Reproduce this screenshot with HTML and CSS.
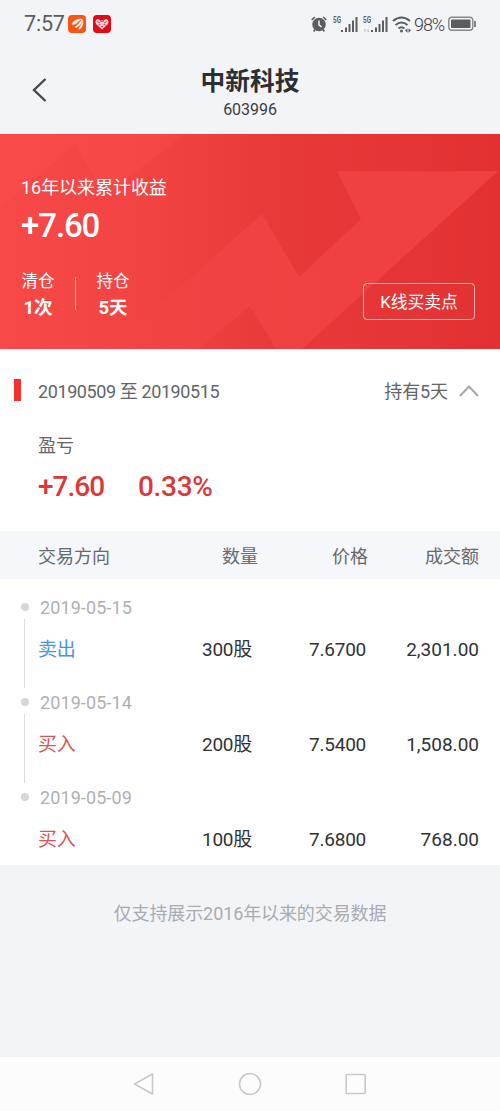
FILE: index.html
```html
<!DOCTYPE html>
<html lang="zh-CN">
<head>
<meta charset="utf-8">
<meta name="viewport" content="width=device-width">
<title>中新科技</title>
<link rel="stylesheet" href="styles.css">
</head>
<body>
<div class="app">
  <div class="status">
    <span class="clock">7:57</span>
    <svg class="badge-orange" width="18" height="18" viewBox="0 0 18 18"><rect width="18" height="18" rx="4" fill="#f95615"/><path d="M4 9C5.500 5.500 9.500 4 14 4C11 5 9.500 8 5.500 9.600ZM7 11.800C10 10 12 7.500 14.300 4.300C13.500 8.500 11.500 11 8 12.700ZM10.800 13.500C13 11 14.200 8 14.600 5C15.300 8.500 14.500 12 11.800 14.300Z" fill="#fff" stroke="#fff" stroke-width=".5"/></svg>
    <svg class="badge-red" width="18" height="18" viewBox="0 0 18 18"><rect width="18" height="18" rx="4" fill="#e30919"/><path d="M9 14.500L3.500 9.500C1.500 6.500 3 4 5.500 4L7 5.500H11L12.500 4C15 4 16.500 6.500 14.500 9.500Z" fill="#fff" opacity=".85"/><path d="M4 6.500L7 8M14 6.500L11 8M5.500 10L7.500 9.500M12.500 10L10.500 9.500M8 12L9 11L10 12M7 5.500L9 7L11 5.500" stroke="#e30919" stroke-width=".8" fill="none"/></svg>
    <svg class="indicators" width="104" height="20" viewBox="0 0 104 20">
      <g fill="none" stroke="#5b5d61">
        <circle cx="8" cy="10.500" r="6" fill="#5b5d61" stroke-width="1.500"/>
        <path d="M.7 6L3.800 3M15.300 6L12.200 3M4 15.500L2.700 17.500M12 15.500L13.300 17.500" stroke-width="1.700"/>
        <path d="M8 6.500V10.800L10.500 13" stroke="#f3f4f8" stroke-width="1.500"/>
        <path d="M31 18V16M35 18V13.500M38.500 18V10M42 18V6.500M45.500 18V3M61 18V16M65 18V13.500M68.500 18V10M72 18V6.500M75.500 18V3" stroke-width="2"/>
        <path d="M82 7Q90.500 0 99 7M84.500 11Q90.500 6 96.500 11M87.500 14.500Q90.500 12 93.500 14.500" stroke-width="1.900"/>
      </g>
      <circle cx="90.500" cy="17" r="1.500" fill="#5b5d61"/>
      <path d="M94 16.500L96.500 14.200V18.800ZM100 16.500L97.500 14.200V18.800Z" fill="#5b5d61"/>
      <path d="M54 15V18M53 16L54 15M57 15V18M58 17L57 18" stroke="#bbbdc1" fill="none"/>
      <text class="net" x="22" y="9" textLength="8" lengthAdjust="spacingAndGlyphs">5G</text><text class="net" x="52" y="9" textLength="8" lengthAdjust="spacingAndGlyphs">5G</text>
    </svg>
    <span class="percent">98%</span>
    <svg class="battery" width="30" height="16" viewBox="0 0 30 16"><rect x=".8" y="1.300" width="24" height="13" rx="3" fill="none" stroke="#85878b" stroke-width="1.400"/><rect x="3" y="3.500" width="19.500" height="8.600" rx="1" fill="#5b5d61"/><path d="M27 5V11" stroke="#66686c" stroke-width="1.600"/></svg>
  </div>
  <header class="header">
    <svg class="back" width="18" height="26" viewBox="0 0 18 26"><path d="M14.500 2L3 13L14.500 24" fill="none" stroke="#45474b" stroke-width="2.400"/></svg>
    <h1 class="title">中新科技</h1>
    <div class="code">603996</div>
  </header>
  <section class="hero">
    <svg class="hero-art" width="500" height="215" viewBox="0 0 500 215">
      <defs>
        <linearGradient id="base" x1="0" y1="0" x2="1" y2="0"><stop offset="0" stop-color="#f84949"/><stop offset=".3" stop-color="#f24343"/><stop offset=".57" stop-color="#e83939"/><stop offset="1" stop-color="#e33132"/></linearGradient>
        <linearGradient id="band" gradientUnits="userSpaceOnUse" x1="130" y1="0" x2="500" y2="0"><stop offset="0" stop-color="#f74848" stop-opacity="0"/><stop offset=".3" stop-color="#f24444" stop-opacity=".8"/><stop offset="1" stop-color="#f04141"/></linearGradient>
      </defs>
      <rect width="500" height="215" fill="url(#base)"/>
      <path d="M0 75L75 10L105 62L185 0H0Z" fill="#fa5551" opacity=".25"/>
      <path d="M498 37H337L361 85L299 143L262 80L110 215H198L250 172L276 215H302Z" fill="url(#band)"/>
    </svg>
    <div class="hero-label">16年以来累计收益</div>
    <div class="hero-value">+7.60</div>
    <div class="hero-bottom">
      <div class="stat"><span class="stat-label">清仓</span><span class="stat-value">1次</span></div>
      <i class="divider"></i>
      <div class="stat"><span class="stat-label">持仓</span><span class="stat-value">5天</span></div>
      <div class="kline">K线买卖点</div>
    </div>
  </section>
  <section class="summary">
    <div class="period"><i class="mark"></i><span class="dates">20190509 至 20190515</span><span class="held">持有5天</span><svg class="chevron" width="20" height="14" viewBox="0 0 20 14"><path d="M1 12L10 2.500L19 12" fill="none" stroke="#a9a9a9" stroke-width="2"/></svg></div>
    <div class="pl-label">盈亏</div>
    <div class="pl"><span class="amount">+7.60</span><span class="rate">0.33%</span></div>
  </section>
  <div class="cols table-head"><span>交易方向</span><span>数量</span><span>价格</span><span>成交额</span></div>
  <section class="trades">
    <div class="trade"><div class="rail"><i class="dot"></i><i class="line"></i></div><div class="date">2019-05-15</div><div class="cols values"><span class="sell">卖出</span><span>300股</span><span>7.6700</span><span class="total">2,301.00</span></div></div>
    <div class="trade"><div class="rail"><i class="dot"></i><i class="line"></i></div><div class="date">2019-05-14</div><div class="cols values"><span class="buy">买入</span><span>200股</span><span>7.5400</span><span class="total">1,508.00</span></div></div>
    <div class="trade"><div class="rail"><i class="dot"></i></div><div class="date">2019-05-09</div><div class="cols values"><span class="buy">买入</span><span>100股</span><span>7.6800</span><span class="total">768.00</span></div></div>
  </section>
  <div class="note">仅支持展示2016年以来的交易数据</div>
  <nav class="nav">
    <svg width="24" height="26" viewBox="0 0 24 26"><path d="M20.500 3V23L2.500 13Z" fill="none" stroke="#c9c9c9" stroke-width="1.600" stroke-linejoin="round"/></svg>
    <svg width="24" height="26" viewBox="0 0 24 26"><circle cx="12" cy="13" r="10.500" fill="none" stroke="#c9c9c9" stroke-width="1.600"/></svg>
    <svg width="24" height="26" viewBox="0 0 24 26"><rect x="2.200" y="3.500" width="19" height="19" rx=".8" fill="none" stroke="#c9c9c9" stroke-width="1.600"/></svg>
  </nav>
</div>
</body>
</html>
```
FILE: styles.css
```css
* { box-sizing: border-box; }
body { margin: 0; background: #f3f4f8; font-family: Roboto, "Noto Sans CJK SC", sans-serif; }
svg { display: block; flex: none; }
.app { width: 500px; height: 1111px; display: flex; flex-direction: column; overflow: hidden; }
.app > * { flex: none; }

.status { height: 48px; display: flex; align-items: center; padding-left: 24px; color: #5b5d61; }
.clock { width: 44px; font-size: 21.500px; line-height: 48px; letter-spacing: -.2px; }
.badge-red { margin-left: 7px; }
.indicators { margin-left: 200px; }
.net { font: 700 8.500px Roboto, sans-serif; fill: #5b5d61; }
.percent { width: 32px; margin-left: -1px; font-size: 18px; font-weight: 300; letter-spacing: -1.100px; color: #3f4145; }
.battery { margin-left: 2px; }

.header { position: relative; height: 86px; padding-top: 17px; text-align: center; }
.back { position: absolute; left: 31px; top: 29px; }
.title { margin: 0; font-size: 24.700px; line-height: 33px; font-weight: 700; color: #2c2e32; }
.code { font-size: 16px; line-height: 24px; color: #3b3d41; letter-spacing: -.05px; }

.hero { position: relative; height: 215px; padding: 40px 25px 0 21px; color: #fff; }
.hero-art { position: absolute; inset: 0; }
.hero-label, .hero-value, .hero-bottom { position: relative; }
.hero-label { font-size: 18px; line-height: 28px; letter-spacing: -.05px; }
.hero-value { font-size: 33px; line-height: 48px; font-weight: 500; letter-spacing: -1.100px; }
.hero-bottom { display: flex; margin-top: 18px; }
.stat { width: 34px; display: flex; flex-direction: column; align-items: center; white-space: nowrap; }
.stat-label { font-size: 16.500px; line-height: 28px; }
.stat-value { font-size: 18.500px; line-height: 25px; font-weight: 700; letter-spacing: -.1px; }
.divider { width: 1px; height: 33px; margin: 9px 20px 0; background: #ffaaa5; }
.kline { width: 112px; height: 37px; margin: 15px 0 0 auto; border: 1px solid #ffb4af; border-radius: 4px; text-align: center; font-size: 16.800px; line-height: 37px; }

.summary { height: 182px; padding: 29px 21px 0 14px; background: #fff; color: #626468; }
.period { height: 26px; display: flex; align-items: center; font-size: 18px; line-height: 28px; }
.mark { width: 7px; height: 22px; margin: -2px 17px 0 0; background: #f5302e; }
.dates { padding-top: 1px; letter-spacing: -.4px; }
.held { margin-left: auto; padding-top: 1px; letter-spacing: -.1px; }
.chevron { margin-left: 11px; }
.pl-label { margin: 28px 0 0 24px; font-size: 18px; line-height: 28px; }
.pl { display: flex; margin: 7px 0 0 24px; font-size: 28px; line-height: 40px; font-weight: 500; color: #dc3739; }
.amount { width: 100px; letter-spacing: -1px; }
.rate { letter-spacing: -.3px; }

.cols { display: grid; grid-template-columns: 1fr 80px 114px 113px; text-align: right; }
.cols > :first-child { text-align: left; }
.table-head { height: 48px; padding: 0 21px 0 38px; grid-template-columns: 1fr 80px 110px 111px; background: #f6f7fb; color: #66686c; font-size: 18px; line-height: 52px; }
.trades { height: 286px; background: #fff; }
.trade { position: relative; height: 95px; padding: 15px 21px 0 38px; }
.rail { position: absolute; left: 21px; top: 23.500px; width: 8px; }
.dot { display: block; width: 8px; height: 8px; border-radius: 50%; background: #d7d7d7; }
.line { display: block; width: 1px; height: 69px; margin: 8px 0 0 3px; background: #dedede; }
.date { padding-left: 2px; font-size: 18px; line-height: 27px; letter-spacing: .1px; color: #afb0b2; }
.values { margin-top: 13px; font-size: 19px; line-height: 31px; letter-spacing: -.25px; color: #303236; }
.total { letter-spacing: 0; }
.sell { color: #4794df; }
.buy { color: #d85657; }
.note { height: 192px; padding-top: 35px; text-align: center; font-size: 18px; line-height: 28px; letter-spacing: -.1px; color: #a9abb0; }
.nav { height: 54px; display: flex; justify-content: center; gap: 82px; padding-top: 14px; background: #fcfcfc; }
```
